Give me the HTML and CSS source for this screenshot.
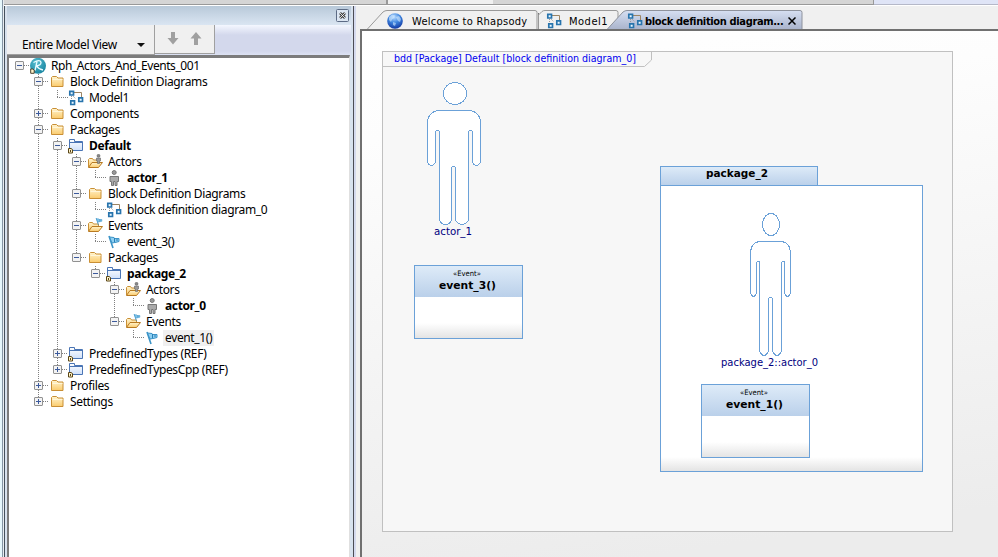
FILE: index.html
```html
<!DOCTYPE html>
<html lang="en">
<head>
<meta charset="utf-8">
<title>Rhapsody</title>
<link rel="stylesheet" href="styles.css">
</head>
<body>
<svg class="defs" width="0" height="0">
  <defs>
    <linearGradient id="gold" x1="0" y1="0" x2="0" y2="1"><stop offset="0" stop-color="#fff4cf"/><stop offset="1" stop-color="#fbcb6c"/></linearGradient>
    <linearGradient id="pkgfill" x1="0" y1="0" x2="0" y2="1"><stop offset="0" stop-color="#fff"/><stop offset="1" stop-color="#cfe0fa"/></linearGradient>
    <linearGradient id="head" x1="0" y1="0" x2="0" y2="1"><stop offset="0" stop-color="#deebf8"/><stop offset="1" stop-color="#bad0ea"/></linearGradient>
    <linearGradient id="foot" x1="0" y1="0" x2="0" y2="1"><stop offset="0" stop-color="#fff"/><stop offset="1" stop-color="#e4e4e4"/></linearGradient>
    <linearGradient id="active" x1="0" y1="0" x2="0" y2="1"><stop offset="0" stop-color="#d6dff2"/><stop offset="1" stop-color="#a9b3cb"/></linearGradient>
    <radialGradient id="ball" cx=".45" cy=".25" r=".8"><stop offset="0" stop-color="#b9dcff"/><stop offset=".45" stop-color="#3f86df"/><stop offset="1" stop-color="#0b2f9c"/></radialGradient>
    <radialGradient id="teal" cx=".4" cy=".3" r=".8"><stop offset="0" stop-color="#58bfd0"/><stop offset="1" stop-color="#117f9c"/></radialGradient>
    <symbol id="i-folder" viewBox="0 0 16 16"><path d="M2.500 12.500v-9l1-1h4l1.500 1.500h5v8.500z" fill="url(#gold)" stroke="#c98f35"/><path d="M3.500 5.500h10" stroke="#fff6d8"/></symbol>
    <symbol id="i-open" viewBox="0 0 16 16"><path d="M1.500 13V5.500l1-1h3l1 1.500h5V8" fill="url(#gold)" stroke="#c98f35"/><path d="M1.500 13.500L5 8.500h10.500L11.500 13.500z" fill="url(#gold)" stroke="#b87a22"/></symbol>
    <symbol id="i-mini" viewBox="0 0 16 16"><circle cx="11.500" cy="1.800" r="1.500" fill="#888" stroke="#555" stroke-width=".5"/><path d="M9.500 4h4v3h-1v2.500h-2V7h-1z" fill="#999" stroke="#666" stroke-width=".6"/></symbol>
    <symbol id="i-flag" viewBox="0 0 16 16"><path d="M3 2L7 14" stroke="#3b93c7" stroke-width="1.600"/><path d="M3.500 3l4.500.5 1 1H13v3l-3 .8L6 9z" fill="#8fd0f2" stroke="#3b93c7"/><path d="M8.500 4v4M11 5v2" stroke="#2b7fb5"/></symbol>
    <symbol id="i-diagram" viewBox="0 0 16 16"><path d="M5 2.500h8.500V8" fill="none" stroke="#9c8463"/><path d="M3.500 6v5M5 6l3 3" stroke="#999" stroke-dasharray="1 1"/><g fill="#e9f7ff" stroke="#2874ad" stroke-width="1.700"><path d="M1.800 1.300h3.700v3.700H1.800zM2.800 10.800h3.700v3.700H2.800zM10.800 7.800h3.700v3.700h-3.700z"/></g></symbol>
    <symbol id="i-actor" viewBox="0 0 16 16"><circle cx="8.200" cy="2.500" r="2" fill="#999" stroke="#777"/><path d="M4 6.500h8.500v5H11v4H9v-4H7.500v4h-2v-4H4z" fill="#aaa" stroke="#777"/></symbol>
    <symbol id="i-package" viewBox="0 0 16 16"><path d="M1.500 12.500v-11h5v2h8v9z" fill="url(#pkgfill)" stroke="#4a75b5"/><path d="M2 4.500h12.500" stroke="#4a75b5"/><path d="M.5 10.500V15H4.500v-3.500L3 10.500z" fill="#fff3c9" stroke="#5a4617"/><path d="M2.500 12v2" stroke="#5a4617"/></symbol>
    <symbol id="i-root" viewBox="0 0 16 16"><circle cx="8" cy="7.800" r="8" fill="url(#teal)"/><path d="M5 12.500L7 3.500M3.500 4.500Q10 1 11 4.300Q11 7.500 6.500 7.800Q8.500 11 13 12" fill="none" stroke="#e9fbff" stroke-width="1.300"/><path d="M.7 11v4.300h3.500V12L3 11z" fill="#fff3c9" stroke="#4b4230"/></symbol>
    <symbol id="i-globe" viewBox="0 0 16 16"><circle cx="8" cy="8" r="7.800" fill="url(#ball)"/><path d="M2 4l3-2.500 3 1-1 2.500-2 1.500L4 9 2 7zM9 4l3-1 2 3-1 3-2-1zM6 9l3 1-1 3-2-1z" fill="#d3ebff" opacity=".6"/></symbol>
  </defs>
</svg>

<div class="app">
  <div class="topstrip"><i class="strip-a"></i><i class="strip-b"></i><i class="strip-c"></i></div>
  <div class="main">
    <aside class="browser">
      <div class="titlebar">
        <svg class="close" width="13" height="13"><rect x=".5" y=".5" width="12" height="12" rx="1" fill="#dce6f2" stroke="#5c6b85"/><path d="M4 4l5 5M9 4l-5 5" stroke="#444" stroke-width="2.600"/><path d="M4 4l5 5M9 4l-5 5" stroke="#fff" stroke-width=".8"/></svg>
      </div>
      <div class="toolbar">
        <div class="combo"><span class="combo-text">Entire Model View</span><svg width="8" height="4"><path d="M0 0h8L4 4z" fill="#111"/></svg></div>
        <div class="arrows">
          <svg width="12" height="13"><path d="M4 0h4v6h3.500L6 12.500.5 6H4z" fill="#a0a0a0"/></svg>
          <svg width="12" height="13"><path d="M4 13h4V6.500h3.500L6 0 .5 6.500H4z" fill="#a0a0a0"/></svg>
        </div>
      </div>
      <div class="treebox">
        <ul class="tree">
          <li class="root"><div class="row"><b class="box"></b><i class="dots"></i><svg class="ic"><use href="#i-root"/></svg><span class="l-root">Rph_Actors_And_Events_001</span></div>
            <ul>
              <li><div class="row"><b class="box"></b><i class="dots"></i><svg class="ic"><use href="#i-folder"/></svg><span>Block Definition Diagrams</span></div>
                <ul><li><div class="row leaf"><i class="dots"></i><svg class="ic"><use href="#i-diagram"/></svg><span>Model1</span></div></li></ul>
              </li>
              <li><div class="row"><b class="box plus"></b><i class="dots"></i><svg class="ic"><use href="#i-folder"/></svg><span>Components</span></div></li>
              <li><div class="row"><b class="box"></b><i class="dots"></i><svg class="ic"><use href="#i-folder"/></svg><span>Packages</span></div>
                <ul>
                  <li><div class="row"><b class="box"></b><i class="dots"></i><svg class="ic"><use href="#i-package"/></svg><span class="strong">Default</span></div>
                    <ul>
                      <li><div class="row"><b class="box"></b><i class="dots"></i><svg class="ic"><use href="#i-open"/><use href="#i-mini"/></svg><span>Actors</span></div>
                        <ul><li><div class="row leaf"><i class="dots"></i><svg class="ic"><use href="#i-actor"/></svg><span class="strong">actor_1</span></div></li></ul>
                      </li>
                      <li><div class="row"><b class="box"></b><i class="dots"></i><svg class="ic"><use href="#i-folder"/></svg><span>Block Definition Diagrams</span></div>
                        <ul><li><div class="row leaf"><i class="dots"></i><svg class="ic"><use href="#i-diagram"/></svg><span>block definition diagram_0</span></div></li></ul>
                      </li>
                      <li><div class="row"><b class="box"></b><i class="dots"></i><svg class="ic"><use href="#i-open"/><use href="#i-flag" x="7" y="-1" width="10" height="9"/></svg><span>Events</span></div>
                        <ul><li><div class="row leaf"><i class="dots"></i><svg class="ic"><use href="#i-flag"/></svg><span>event_3()</span></div></li></ul>
                      </li>
                      <li><div class="row"><b class="box"></b><i class="dots"></i><svg class="ic"><use href="#i-folder"/></svg><span>Packages</span></div>
                        <ul>
                          <li><div class="row"><b class="box"></b><i class="dots"></i><svg class="ic"><use href="#i-package"/></svg><span class="strong">package_2</span></div>
                            <ul>
                              <li><div class="row"><b class="box"></b><i class="dots"></i><svg class="ic"><use href="#i-open"/><use href="#i-mini"/></svg><span>Actors</span></div>
                                <ul><li><div class="row leaf"><i class="dots"></i><svg class="ic"><use href="#i-actor"/></svg><span class="strong">actor_0</span></div></li></ul>
                              </li>
                              <li><div class="row"><b class="box"></b><i class="dots"></i><svg class="ic"><use href="#i-open"/><use href="#i-flag" x="7" y="-1" width="10" height="9"/></svg><span>Events</span></div>
                                <ul><li><div class="row leaf"><i class="dots"></i><svg class="ic"><use href="#i-flag"/></svg><span class="selected">event_1()</span></div></li></ul>
                              </li>
                            </ul>
                          </li>
                        </ul>
                      </li>
                    </ul>
                  </li>
                  <li><div class="row"><b class="box plus"></b><i class="dots"></i><svg class="ic"><use href="#i-package"/></svg><span>PredefinedTypes (REF)</span></div></li>
                  <li><div class="row"><b class="box plus"></b><i class="dots"></i><svg class="ic"><use href="#i-package"/></svg><span>PredefinedTypesCpp (REF)</span></div></li>
                </ul>
              </li>
              <li><div class="row"><b class="box plus"></b><i class="dots"></i><svg class="ic"><use href="#i-folder"/></svg><span>Profiles</span></div></li>
              <li><div class="row"><b class="box plus"></b><i class="dots"></i><svg class="ic"><use href="#i-folder"/></svg><span>Settings</span></div></li>
            </ul>
          </li>
        </ul>
      </div>
    </aside>
    <section class="editor">
      <div class="tabs">
        <div class="tab tab-welcome">
          <svg class="shape" width="172" height="19"><path d="M0 19.500L16 2q2-1.500 4-1.500h148q2 0 2 2v17" fill="#f0f0f0" stroke="#999"/><path d="M171.500 3v16.500" stroke="#777"/></svg>
          <svg class="ic"><use href="#i-globe"/></svg><span>Welcome to Rhapsody</span>
        </div>
        <div class="tab tab-model">
          <svg class="shape" width="82" height="19"><path d="M.5 19.500V5L4 1.500q1-1 3-1h71q2 0 2 2v17" fill="#f0f0f0" stroke="#999"/></svg>
          <svg class="ic"><use href="#i-diagram"/></svg><span>Model1</span>
        </div>
        <div class="tab tab-active">
          <svg class="shape" width="196" height="19"><path d="M0 19.500L16 2q2-1.500 4-1.500h173q2 0 2 2v17" fill="url(#active)" stroke="#8e929c"/></svg>
          <svg class="ic"><use href="#i-diagram"/></svg><span>block definition diagram...</span>
          <svg class="x" width="8" height="8"><path d="M.5.5l7 7M7.500.5l-7 7" stroke="#000" stroke-width="1.500"/></svg>
        </div>
      </div>
      <div class="canvas">
        <svg class="diagram" width="636" height="526" viewBox="362 31 636 526">
          <rect x="382.500" y="51.500" width="570" height="480" fill="#f7f7f7" stroke="#c0c0c0"/>
          <path d="M382.500 66.500h262l7-6.500v-8.500" fill="none" stroke="#c0c0c0"/>
          <text x="394" y="62" class="t-frame" textLength="242" lengthAdjust="spacingAndGlyphs">bdd [Package] Default [block definition diagram_0]</text>

          <g class="actor">
            <ellipse cx="455" cy="93.500" rx="11.500" ry="11"/>
            <path d="M439.500 110.500h29q12 1 12 13V162q-1.500 3.500-4 3.500t-4-3.500v-30q0-1.500-2-1.500t-2 1.500v88q-2.500 4.500-6.500 4.500t-6.500-4.500v-52q0-1.500-2-1.500t-2 1.500v52q-2 4.500-6 4.500t-6-4.500v-88q0-1.500-2-1.500t-2 1.500v30q-1.500 3.500-4 3.500t-4-3.500v-38.500q0-12 12-13z"/>
          </g>
          <text x="434" y="235" class="t-name" textLength="38" lengthAdjust="spacingAndGlyphs">actor_1</text>

          <rect x="414.500" y="265.500" width="108" height="73" class="box-shape"/>
          <rect x="415" y="266" width="107" height="31" fill="url(#head)"/>
          <rect x="415" y="323" width="107" height="15" fill="url(#foot)"/>
          <text x="453" y="276" class="t-stereo" textLength="28" lengthAdjust="spacingAndGlyphs">«Event»</text>
          <text x="439" y="289" class="t-bold" textLength="57" lengthAdjust="spacingAndGlyphs">event_3()</text>

          <rect x="660.500" y="166.500" width="157" height="19" fill="url(#head)" stroke="#6ba1d8"/>
          <rect x="660.500" y="185.500" width="262" height="286" class="box-shape"/>
          <rect x="661" y="457" width="261" height="14" fill="url(#foot)"/>
          <text x="706" y="177" class="t-bold" textLength="62" lengthAdjust="spacingAndGlyphs">package_2</text>

          <g class="actor">
            <ellipse cx="771" cy="224.500" rx="8.500" ry="11"/>
            <path d="M759.500 241.500h22q9 1 9 13V293q-1 3.500-3 3.500t-3-3.500v-30q0-1.500-1.500-1.500t-1.500 1.500v88q-2 4.500-4.500 4.500t-4.500-4.500v-52q0-1.500-2-1.500t-2 1.500v52q-2 4.500-4.500 4.500t-4.500-4.500v-88q0-1.500-1.500-1.500t-1.500 1.500v30q-1 3.500-3 3.500t-3-3.500v-38.500q0-12 9-13z"/>
          </g>
          <text x="721" y="366" class="t-name" textLength="97" lengthAdjust="spacingAndGlyphs">package_2::actor_0</text>

          <rect x="701.500" y="384.500" width="108" height="73" class="box-shape"/>
          <rect x="702" y="385" width="107" height="31" fill="url(#head)"/>
          <rect x="702" y="442" width="107" height="15" fill="url(#foot)"/>
          <text x="740" y="395" class="t-stereo" textLength="28" lengthAdjust="spacingAndGlyphs">«Event»</text>
          <text x="726" y="408" class="t-bold" textLength="57" lengthAdjust="spacingAndGlyphs">event_1()</text>
        </svg>
      </div>
    </section>
  </div>
</div>
</body>
</html>
```
FILE: styles.css
```css
* { box-sizing: border-box; }
body { margin: 0; width: 998px; height: 557px; overflow: hidden; background: #f0f0f0; font-family: "Noto Sans", sans-serif; font-size: 12px; color: #000; }
.defs { position: absolute; }
.app { display: flex; flex-direction: column; height: 557px; padding-left: 2px; background: linear-gradient(90deg, #e6f7fc 2px, #8595a5 2px 3px, #e9edf0 3px 4px, #f0f0f0 4px); }
.topstrip { display: flex; height: 6px; margin-left: 2px; border-bottom: 1px solid #fff; }
.strip-a, .strip-b { background: #d5d5d5; border-bottom: 1px solid #999; }
.strip-a { width: 384px; border-right: 2px solid #999; }
.strip-b { width: 486px; border-right: 1px solid #999; background: linear-gradient(90deg, #f0f0f0 105px, #d5d5d5 105px); }
.strip-c { flex: 1; background: #dfe4f6; border-bottom: 1px solid #b5b8c8; }
.main { display: flex; flex: 1; min-height: 0; padding-left: 2px; }

.browser { display: flex; flex-direction: column; width: 350px; padding: 0 2px 0 2px; border-left: 1px solid #44505c; border-right: 1px solid #4c4c54; background: #d8e2ee; }
.titlebar { display: flex; justify-content: flex-end; height: 19px; padding: 3px 2px 0 0; background: linear-gradient(#b8c9d9, #dae5f2); }
.toolbar { display: flex; align-items: flex-start; height: 30px; background: linear-gradient(#f4f7ff, #d3d8ec 10px 26px, #dce2f3); }
.combo { display: flex; align-items: center; width: 148px; height: 30px; padding: 10px 9px 0 15px; justify-content: space-between; background: #f0f0f0; border-right: 1px solid #a0a0a0; border-bottom: 1px solid #a0a0a0; }
.combo-text { white-space: nowrap; letter-spacing: -.36px; line-height: 17px; }
.arrows { display: flex; gap: 11px; width: 60px; height: 29px; padding: 7px 0 0 12px; background: #f0f0f0; border-right: 1px solid #a0a0a0; border-bottom: 1px solid #a0a0a0; }
.treebox { flex: 1; min-height: 0; padding: 0 0 0 6px; margin-right: 1px; background: #fff; border-top: 3px solid #7c7c7c; border-left: 2px solid #7c7c7c; border-right: 1px solid #e0e0e0; }

.tree, .tree ul { list-style: none; margin: 0; padding: 0; }
.tree ul { margin-left: 19px; }
.tree li { background: repeating-linear-gradient(#808080 0 1px, transparent 1px 2px) 4px 0 / 1px 100% no-repeat; }
.tree li:last-child { background-size: 1px 8px; }
.tree li.root { background: none; }
.row { display: flex; align-items: center; height: 16px; white-space: nowrap; }
.box { width: 9px; height: 9px; margin-top: -1px; border: 1px solid #919191; border-radius: 1px; background: linear-gradient(#3c5a9c, #3c5a9c) center / 5px 1px no-repeat, #f3f3f3; }
.box.plus { background: linear-gradient(#3c5a9c, #3c5a9c) center / 5px 1px no-repeat, linear-gradient(#3c5a9c, #3c5a9c) center / 1px 5px no-repeat, #f3f3f3; }
.dots { width: 6px; height: 1px; margin-top: -1px; background: repeating-linear-gradient(90deg, #808080 0 1px, transparent 1px 2px); }
.leaf .dots { width: 11px; margin-left: 4px; }
.ic { width: 16px; height: 16px; flex: none; overflow: visible; fill: none; }
.row span { height: 16px; line-height: 16px; margin-left: 3px; padding: 0 2px; letter-spacing: -.36px; }
.row .l-root { letter-spacing: -.43px; }
.row .strong { font-weight: 700; letter-spacing: -.37px; }
.row .selected { background: #f0f0f0; }

.editor { display: flex; flex: 1; flex-direction: column; min-width: 0; padding-left: 6px; background: linear-gradient(90deg, #d5daee 2px, #f0f0f0 2px); }
.tabs { display: flex; height: 23px; padding: 4px 0 0 7px; font-family: "DejaVu Sans Condensed", "DejaVu Sans", sans-serif; font-stretch: condensed; font-size: 11px; }
.tab { position: relative; display: flex; align-items: center; height: 19px; padding-top: 2px; white-space: nowrap; }
.shape { position: absolute; left: 0; top: 0; z-index: 0; }
.tab > :not(.shape) { position: relative; flex: none; }
.tab span { padding-top: 1px; }
.tab-welcome { width: 171px; padding-left: 20px; letter-spacing: .27px; }
.tab-welcome span { margin-left: 9px; }
.tab-model { width: 69px; padding-left: 8px; letter-spacing: .5px; }
.tab-model span { margin-left: 7px; }
.tab-active { width: 196px; padding-left: 20px; font-weight: 700; letter-spacing: -.35px; }
.tab-active span { margin-left: 2px; }
.tab-active .x { margin-left: 5px; }
.canvas { flex: 1; min-height: 0; border-left: 2px solid #707070; border-top: 2px solid #707070; background: linear-gradient(172deg, #fff, #fdfdfd 18%, #ececec 92%); }
.diagram { display: block; font-family: "DejaVu Sans Condensed", "DejaVu Sans", sans-serif; font-stretch: condensed; font-size: 11px; }
.actor { fill: #fff; stroke: #6ba1d8; shape-rendering: crispEdges; }
.box-shape { fill: #fff; stroke: #6ba1d8; }
.t-frame { fill: #0000f0; }
.t-name { fill: #000080; }
.t-bold { font-weight: 700; }
.t-stereo { font-size: 7.5px; }
```
